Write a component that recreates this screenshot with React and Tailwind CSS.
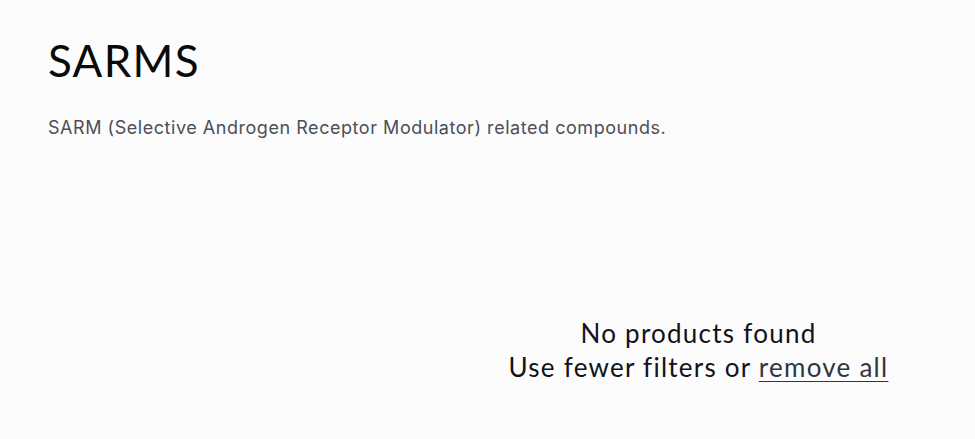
export default function App() {
  return (
    <div className="min-h-screen bg-[#fcfcfc] px-12 pt-[32px]">
      <h1 className="text-[44px] leading-[56px] tracking-[0.03em] text-[#0a0a0a]" style={{ fontFamily: "Lato, 'Noto Sans', sans-serif" }}>
        SARMS
      </h1>
      <p className="mt-[26px] text-[18px] leading-[28px] tracking-[0.03em] text-[#4b4f58]" style={{ fontFamily: "Inter, sans-serif" }}>
        SARM (Selective Androgen Receptor Modulator) related compounds.
      </p>
      <div className="flex mt-[174px]">
        <div className="w-[422px] shrink-0" />
        <div className="flex-1 text-center text-[26px] leading-[34px] text-[#111318] tracking-[0.048em]" style={{ fontFamily: "Lato, 'Noto Sans', sans-serif" }}>
          <p>No products found</p>
          <p>
            Use fewer filters or <a href="#" className="underline underline-offset-4 decoration-1 text-[#33363d]">remove all</a>
          </p>
        </div>
      </div>
    </div>
  );
}
